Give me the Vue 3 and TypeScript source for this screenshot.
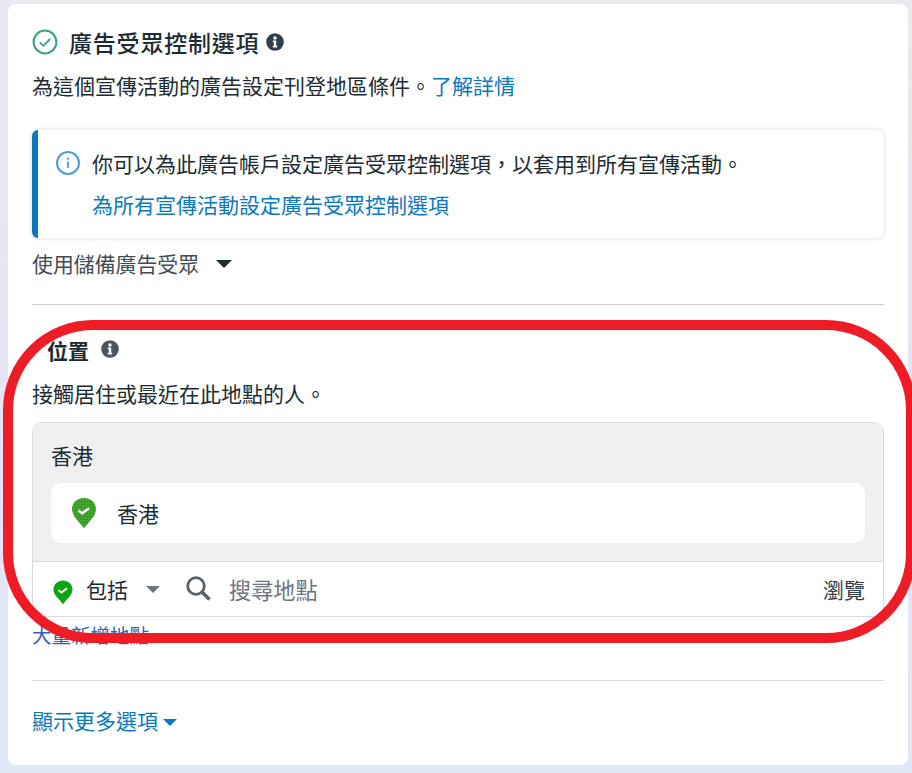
<template>
  <div class="page">
    <div class="card">
      <div class="title-row">
        <svg class="check-icon" width="26" height="26" viewBox="0 0 26 26">
          <circle cx="13" cy="13" r="11.400" fill="none" stroke="#36a184" stroke-width="2" />
          <path d="M7.800 13.400l3.600 3.400 6.800-6.800" fill="none" stroke="#36a184" stroke-width="1.800" />
        </svg>
        <h2>廣告受眾控制選項</h2>
        <svg class="info-dark" width="18" height="18" viewBox="0 0 18 18">
          <circle cx="9" cy="9" r="8.800" fill="#2f3f4d" />
          <circle cx="9" cy="5" r="1.700" fill="#fff" />
          <path d="M6.800 7.600h3.400v5.200h1v1.600H6.800v-1.600h1v-3.600h-1z" fill="#fff" />
        </svg>
      </div>
      <p class="desc">為這個宣傳活動的廣告設定刊登地區條件。<a>了解詳情</a></p>

      <div class="notice">
        <svg class="info-blue" width="24" height="24" viewBox="0 0 24 24">
          <circle cx="12" cy="12" r="11" fill="none" stroke="#4a9fd8" stroke-width="2" />
          <circle cx="12" cy="7.600" r="1.200" fill="#4a9fd8" />
          <path d="M12 10.600v6.400" stroke="#4a9fd8" stroke-width="1.800" />
        </svg>
        <div class="notice-text">
          <p>你可以為此廣告帳戶設定廣告受眾控制選項，以套用到所有宣傳活動。</p>
          <a>為所有宣傳活動設定廣告受眾控制選項</a>
        </div>
      </div>

      <div class="saved">
        <span>使用儲備廣告受眾</span>
        <i class="caret dark"></i>
      </div>
      <hr class="rule first" />

      <div class="loc-title">
        <h3>位置</h3>
        <svg class="info-grey" width="18" height="18" viewBox="0 0 18 18">
          <circle cx="9" cy="9" r="8.800" fill="#4b5561" />
          <circle cx="9" cy="5" r="1.700" fill="#fff" />
          <path d="M6.800 7.600h3.400v5.200h1v1.600H6.800v-1.600h1v-3.600h-1z" fill="#fff" />
        </svg>
      </div>
      <p class="reach">接觸居住或最近在此地點的人。</p>

      <div class="loc-box">
        <div class="loc-top">
          <div class="region">香港</div>
          <div class="chip">
            <svg width="26" height="32" viewBox="0 0 26 32">
              <defs>
                <pattern id="pin-dots" width="3" height="3" patternUnits="userSpaceOnUse">
                  <rect width="3" height="3" fill="#45a62c" />
                  <circle cx="1.500" cy="1.500" r="0.700" fill="#1f8a22" />
                </pattern>
              </defs>
              <path d="M13 31.500C9.500 26 1 20 1 11.800 1 5.500 6.400 1 13 1s12 4.500 12 10.800C25 20 16.500 26 13 31.500z" fill="url(#pin-dots)" />
              <path d="M7.500 13.500l3.800 2.700 6.700-5" fill="none" stroke="#fff" stroke-width="2.400" />
            </svg>
            <span>香港</span>
          </div>
        </div>
        <div class="loc-search">
          <svg class="pin" width="20" height="25" viewBox="0 0 20 25">
            <path d="M10 24.500C7.500 20 0.500 15.500 0.500 9.500 0.500 4.300 4.800 0.500 10 0.500s9.500 3.800 9.500 9C19.500 15.500 12.500 20 10 24.500z" fill="#0ba50f" />
            <path d="M5.500 10.300l3 2.300 5.500-4.400" fill="none" stroke="#fff" stroke-width="2" />
          </svg>
          <span class="include">包括</span>
          <i class="caret grey"></i>
          <svg class="search" width="26" height="26" viewBox="0 0 26 26">
            <circle cx="10" cy="10" r="8.300" fill="none" stroke="#5a6068" stroke-width="2.800" />
            <path d="M16 16l7.500 7.500" stroke="#5a6068" stroke-width="3.600" />
          </svg>
          <span class="placeholder">搜尋地點</span>
          <span class="browse">瀏覽</span>
        </div>
      </div>

      <a class="bulk">大量新增地點</a>
      <hr class="rule second" />
      <a class="more">顯示更多選項<i class="caret blue"></i></a>
    </div>
    <div class="highlight"></div>
  </div>
</template>

<script setup lang="ts">
</script>

<style>
html,
body {
  margin: 0;
  overflow: hidden;
}
</style>

<style scoped>
.page {
  position: relative;
  box-sizing: border-box;
  width: 912px;
  height: 773px;
  padding: 4px 4px 8px 8px;
  background: linear-gradient(180deg, #ece8f2 0%, #e6e4f4 45%, #dfe8f5 100%);
  font-family: "Noto Sans CJK TC", "Noto Sans", sans-serif;
  color: #1c2b33;
  overflow: hidden;
}

.card {
  box-sizing: border-box;
  height: 761px;
  padding: 23px 24px 0;
  background: #fff;
  border-radius: 8px;
}

a {
  color: #0a78be;
}

p,
h2,
h3 {
  margin: 0;
  font-weight: 400;
}

.title-row {
  display: flex;
  align-items: center;
  height: 30px;
}

.check-icon {
  margin-right: 11px;
}

.title-row h2 {
  font-size: 23px;
  font-weight: 500;
  letter-spacing: 0.8px;
  line-height: 30px;
}

.info-dark {
  margin-left: 7px;
}

.desc {
  margin-top: 13px;
  font-size: 21px;
  line-height: 30px;
}

.notice {
  display: flex;
  box-sizing: border-box;
  height: 108px;
  margin-top: 30px;
  padding: 18px 16px 0 18px;
  border-left: 6px solid #0a78be;
  border-radius: 6px;
  box-shadow: 0 0 4px rgba(0, 0, 0, 0.16);
}

.info-blue {
  flex: none;
  margin: 3px 12px 0 0;
}

.notice-text p {
  font-size: 21px;
  line-height: 30px;
}

.notice-text a {
  display: block;
  margin-top: 11px;
  font-size: 21px;
  line-height: 30px;
}

.saved {
  display: flex;
  align-items: center;
  height: 30px;
  margin-top: 10px;
  font-size: 20.900px;
  color: #434c54;
}

.caret {
  display: inline-block;
  width: 0;
  height: 0;
  border-style: solid;
  border-color: transparent;
  border-width: 8px 8px 0;
}

.caret.dark {
  margin: 2px 0 0 17px;
  border-top-color: #1c2b33;
}

.caret.grey {
  margin-left: 18px;
  border-width: 7px 7px 0;
  border-top-color: #6d7580;
}

.caret.blue {
  margin-left: 5px;
  border-width: 7px 7px 0;
  border-top-color: #0a78be;
  vertical-align: 3px;
}

.rule {
  margin: 0;
  border: 0;
  border-top: 1px solid #cbd2d9;
}

.rule.first {
  margin-top: 26px;
}

.loc-title {
  display: flex;
  align-items: center;
  height: 30px;
  margin-top: 30px;
  padding-left: 15px;
}

.loc-title h3 {
  margin-right: 12px;
  font-size: 21px;
  font-weight: 700;
  line-height: 30px;
}

.info-grey {
  margin-bottom: 3px;
}

.reach {
  margin-top: 13px;
  font-size: 21px;
  line-height: 30px;
}

.loc-box {
  box-sizing: border-box;
  height: 195px;
  margin-top: 14px;
  border: 1px solid #d8dbe3;
  border-radius: 10px 10px 0 0;
}

.loc-top {
  box-sizing: border-box;
  height: 139px;
  padding: 17px 18px 0;
  background: #f0f0f0;
  border-bottom: 1px solid #d8dbe3;
  border-radius: 9px 9px 0 0;
}

.region {
  font-size: 21px;
  line-height: 30px;
}

.chip {
  display: flex;
  align-items: center;
  height: 60px;
  margin-top: 13px;
  padding-left: 20px;
  background: #fff;
  border-radius: 10px;
  font-size: 21px;
}

.chip span {
  margin-left: 20px;
}

.loc-search {
  display: flex;
  align-items: center;
  height: 54px;
  padding: 0 18px;
  font-size: 21px;
}

.pin {
  margin: 6px 13px 0 2px;
}

.search {
  margin-left: 26px;
}

.placeholder {
  margin-left: 17px;
  font-size: 22.200px;
  color: #6d7580;
}

.browse {
  margin-left: auto;
  color: #333c44;
}

.bulk {
  display: block;
  margin-top: 3px;
  font-size: 19.500px;
  line-height: 30px;
  color: #2f62ad;
}

.rule.second {
  margin-top: 30px;
  border-top-color: #dadde1;
}

.more {
  display: block;
  margin-top: 24px;
  font-size: 21px;
  line-height: 30px;
}

.highlight {
  position: absolute;
  left: 3px;
  top: 320px;
  width: 913px;
  height: 323px;
  box-sizing: border-box;
  border: 10px solid #ee1c25;
  border-radius: 90px;
  pointer-events: none;
}
</style>
